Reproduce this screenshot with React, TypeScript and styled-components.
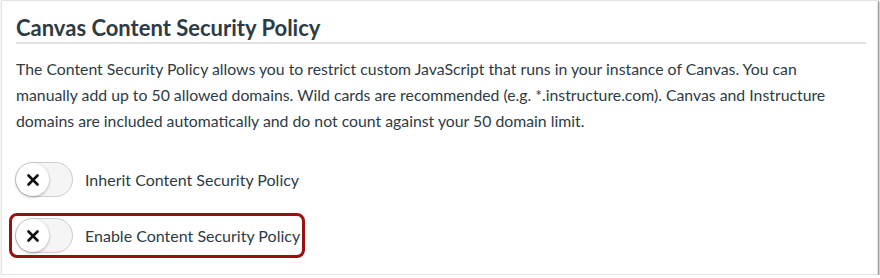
import React from 'react'
import styled, { createGlobalStyle } from 'styled-components'

const GlobalStyle = createGlobalStyle`
  html, body {
    margin: 0;
    padding: 0;
    background: #fff;
  }
  body {
    font-family: Lato, 'Noto Sans', sans-serif;
    color: #2d3b45;
  }
`

const Frame = styled.div`
  box-sizing: border-box;
  width: 877px;
  height: 275px;
  margin-left: 1px;
  background: #fff;
  border: 1px solid #e3e3e3;
  box-shadow: 1px 1px 2px rgba(0, 0, 0, 0.55);
  padding: 13px 11px 0 14px;
`

const Heading = styled.h2`
  margin: 0;
  font-size: 22px;
  font-weight: 700;
  line-height: 28px;
  padding-bottom: 0;
  border-bottom: 2px solid #e1e4e7;
  color: #2d3b45;
`

const Description = styled.p`
  margin: 12px 0 0;
  max-width: 835px;
  font-size: 15.8px;
  line-height: 26px;
  color: #2d3b45;
`

const Options = styled.div`
  display: flex;
  flex-direction: column;
  align-items: flex-start;
  gap: 11px;
  margin-top: 23px;
  margin-left: -7px;
`

const OptionRow = styled.label<{ $highlight?: boolean }>`
  display: flex;
  align-items: center;
  gap: 12px;
  padding: 2px 2px 2px 3px;
  border: 3px solid ${(p) => (p.$highlight ? '#9a1010' : 'transparent')};
  border-radius: 8px;
  font-size: 16px;
  color: #2d3b45;
`

const Track = styled.span`
  position: relative;
  display: inline-block;
  box-sizing: border-box;
  width: 58px;
  height: 35px;
  border-radius: 18px;
  background: #f5f5f5;
  border: 1px solid #c7cdd1;
`

const Knob = styled.span`
  position: absolute;
  top: 0;
  left: 0;
  width: 33px;
  height: 33px;
  border-radius: 50%;
  background: #fff;
  box-shadow: 0 1px 3px rgba(0, 0, 0, 0.3);
  display: flex;
  align-items: center;
  justify-content: center;
`

const CloseIcon = () => (
  <svg width="12" height="12" viewBox="0 0 12 12">
    <path d="M1.5 1.5 L10.5 10.5 M10.5 1.5 L1.5 10.5" stroke="#111" strokeWidth="2.6" strokeLinecap="round" />
  </svg>
)

const Toggle = ({ label, highlight }: { label: string; highlight?: boolean }) => (
  <OptionRow $highlight={highlight}>
    <Track>
      <Knob>
        <CloseIcon />
      </Knob>
    </Track>
    <span>{label}</span>
  </OptionRow>
)

export default function App() {
  return (
    <>
      <GlobalStyle />
      <Frame>
        <Heading>Canvas Content Security Policy</Heading>
        <Description>
          The Content Security Policy allows you to restrict custom JavaScript that runs in your instance of Canvas. You can
          manually add up to 50 allowed domains. Wild cards are recommended (e.g. *.instructure.com). Canvas and Instructure
          domains are included automatically and do not count against your 50 domain limit.
        </Description>
        <Options>
          <Toggle label="Inherit Content Security Policy" />
          <Toggle label="Enable Content Security Policy" highlight />
        </Options>
      </Frame>
    </>
  )
}
